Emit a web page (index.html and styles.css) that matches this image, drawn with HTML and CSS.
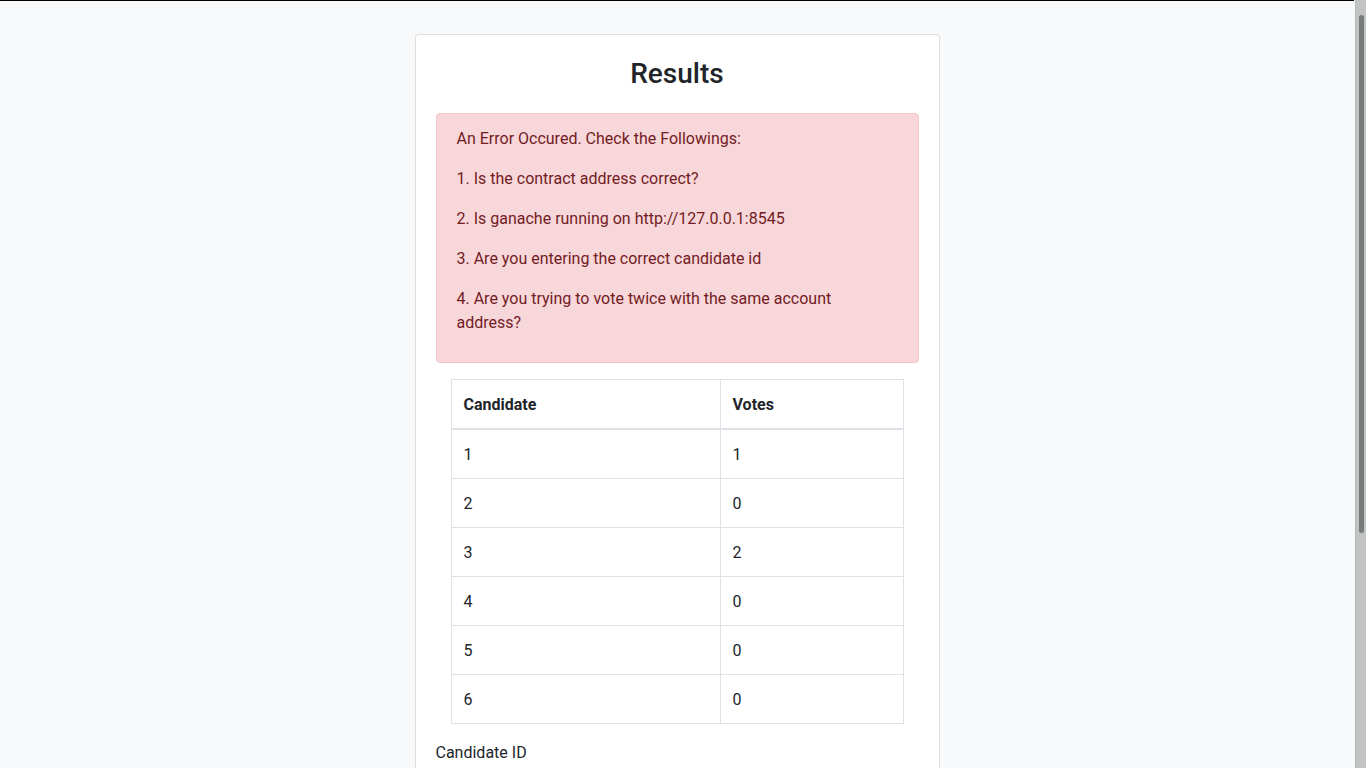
FILE: index.html
```html
<!DOCTYPE html>
<html lang="en">
<head>
<meta charset="utf-8">
<title>Results</title>
<link rel="stylesheet" href="styles.css">
</head>
<body>
<div class="topline"></div>
<main class="page">
  <section class="card">
    <h3 class="title">Results</h3>
    <div class="alert">
      <p>An Error Occured. Check the Followings:</p>
      <p>1. Is the contract address correct?</p>
      <p>2. Is ganache running on http://127.0.0.1:8545</p>
      <p>3. Are you entering the correct candidate id</p>
      <p>4. Are you trying to vote twice with the same account address?</p>
    </div>
    <div class="table-wrap">
      <table class="results">
        <thead>
          <tr><th class="col-cand">Candidate</th><th>Votes</th></tr>
        </thead>
        <tbody>
          <tr><td>1</td><td>1</td></tr>
          <tr><td>2</td><td>0</td></tr>
          <tr><td>3</td><td>2</td></tr>
          <tr><td>4</td><td>0</td></tr>
          <tr><td>5</td><td>0</td></tr>
          <tr><td>6</td><td>0</td></tr>
        </tbody>
      </table>
    </div>
    <form class="vote-form">
      <label class="label" for="cid">Candidate ID</label>
      <input class="input" id="cid" type="text">
      <button class="btn" type="button">Vote</button>
    </form>
  </section>
</main>
<div class="fake-scrollbar" aria-hidden="true"><div class="fake-thumb"></div></div>
</body>
</html>
```
FILE: styles.css
```css
html, body {
  margin: 0;
  padding: 0;
}
body {
  background: #f8f9fa;
  font-family: Roboto, "Liberation Sans", Arial, sans-serif;
  font-size: 16px;
  line-height: 1.5;
  color: #212529;
  padding-right: 12px;
}
.topline {
  height: 1px;
  background: #000;
}
.page {
  padding: 33px 0 235px;
}
.card {
  width: 483px;
  margin: 0 auto;
  background: #fff;
  border: 1px solid rgba(0, 0, 0, 0.125);
  border-radius: 4px;
  padding: 20px 20px 40px;
}
.title {
  margin: 2px 0 22px;
  text-align: center;
  font-size: 28px;
  font-weight: 500;
  line-height: 1.2;
}
.alert {
  background: #f8d7da;
  border: 1px solid #f5c6cb;
  border-radius: 4px;
  color: #721c24;
  padding: 13px 64px 11px 20px;
  margin-bottom: 16px;
}
.alert p {
  margin: 0 0 16px;
}
.table-wrap {
  padding: 0 15px;
  margin-bottom: 16px;
}
.results {
  width: 100%;
  border-collapse: collapse;
}
.results th,
.results td {
  border: 1px solid #dee2e6;
  padding: 13px 12px 11px;
  text-align: left;
  vertical-align: top;
}
.results th {
  font-weight: 700;
  border-bottom-width: 2px;
}
.col-cand {
  width: 244px;
}
.vote-form {
  display: flex;
  flex-direction: column;
  gap: 8px;
}
.label {
  display: block;
  padding-top: 1px;
  margin-bottom: -1px;
}
.input {
  height: 38px;
  box-sizing: border-box;
  border: 1px solid #ced4da;
  border-radius: 4px;
  padding: 6px 12px;
  font: inherit;
}
.btn {
  align-self: flex-start;
  margin-top: 8px;
  background: #007bff;
  color: #fff;
  border: 1px solid #007bff;
  border-radius: 4px;
  padding: 6px 12px;
  font: inherit;
}
.fake-scrollbar {
  position: fixed;
  top: 0;
  right: 0;
  bottom: 0;
  width: 11px;
  background: #c1c4c1;
  border-left: 1px solid #b5b8b5;
  padding: 15px 2px 0 3px;
  box-sizing: border-box;
}
.fake-thumb {
  height: 518px;
  background: #787c7b;
  border-radius: 3px;
}
```
